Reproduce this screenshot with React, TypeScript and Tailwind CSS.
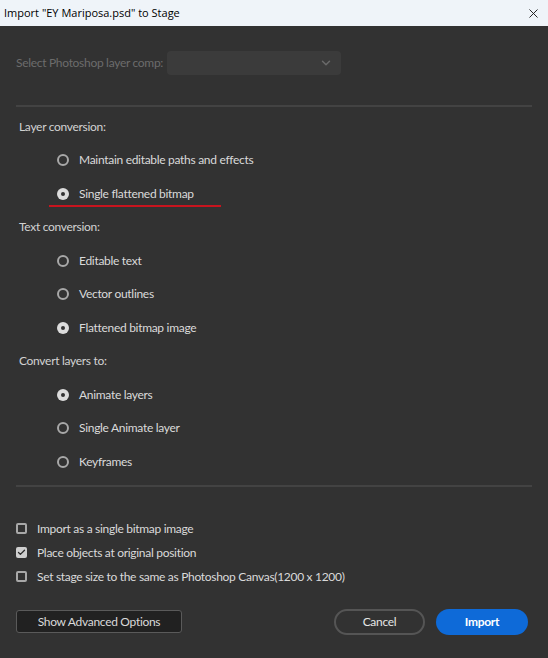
import { X, ChevronDown, Check } from "lucide-react"

const Radio = ({ label, checked, underline }: { label: string; checked?: boolean; underline?: boolean }) => (
  <div className="relative flex h-[33.5px] items-center pl-[57px]">
    {checked ? (
      <span className="flex h-[12px] w-[12px] items-center justify-center rounded-full bg-[#dcdcdc]">
        <span className="h-[4px] w-[4px] rounded-full bg-[#323232]" />
      </span>
    ) : (
      <span className="h-[12px] w-[12px] rounded-full border-2 border-[#a8a8a8]" />
    )}
    <span className="ml-[10px] text-[#dadada]">{label}</span>
    {underline && <span className="absolute bottom-[4px] left-[49px] h-[2px] w-[172px] bg-[#c8141e]" />}
  </div>
)

const Heading = ({ children }: { children: string }) => (
  <div className="flex h-[33.5px] items-center pl-[19px] text-[#d2d2d2]">{children}</div>
)

const CheckRow = ({ label, checked }: { label: string; checked?: boolean }) => (
  <div className="flex h-[24px] items-center pl-[16px]">
    {checked ? (
      <span className="flex h-[11px] w-[11px] items-center justify-center rounded-[2px] bg-[#cfcfcf]">
        <Check className="h-[9px] w-[9px] text-[#2a2a2a]" strokeWidth={3.5} />
      </span>
    ) : (
      <span className="h-[11px] w-[11px] rounded-[2px] border-2 border-[#a8a8a8]" />
    )}
    <span className="ml-[10px] text-[#dadada]">{label}</span>
  </div>
)

export default function App() {
  return (
    <div className="flex h-[658px] w-[548px] flex-col overflow-hidden" style={{ fontFamily: "Lato, 'Open Sans', sans-serif" }}>
      <div className="flex h-[26px] shrink-0 items-center justify-between bg-[#eff4f9] pl-[4px] pr-[7px] text-[11px] text-black" style={{ fontFamily: "'Open Sans', 'Noto Sans', sans-serif" }}>
        <span>Import "EY Mariposa.psd" to Stage</span>
        <X className="h-[15px] w-[15px] text-[#1a1a1a]" strokeWidth={1.5} />
      </div>
      <div className="flex flex-1 flex-col bg-[#323232] text-[12px] tracking-[-0.3px]">
        <div className="flex h-[24px] items-center pl-[16px] mt-[25px]">
          <span className="text-[#6c6c6c]">Select Photoshop layer comp:</span>
          <div className="ml-[4px] flex h-[24px] w-[174px] items-center justify-end rounded-[4px] bg-[#3b3b3b] pr-[8px]">
            <ChevronDown className="h-[14px] w-[14px] text-[#6a6a6a]" strokeWidth={2.5} />
          </div>
        </div>
        <div className="mx-[16px] mt-[30px] h-[2px] bg-[#434343]" />
        <div className="mt-[3px]">
          <Heading>Layer conversion:</Heading>
          <Radio label="Maintain editable paths and effects" />
          <Radio label="Single flattened bitmap" checked underline />
          <Heading>Text conversion:</Heading>
          <Radio label="Editable text" />
          <Radio label="Vector outlines" />
          <Radio label="Flattened bitmap image" checked />
          <Heading>Convert layers to:</Heading>
          <Radio label="Animate layers" checked />
          <Radio label="Single Animate layer" />
          <Radio label="Keyframes" />
        </div>
        <div className="mx-[16px] mt-[6px] h-[2px] bg-[#434343]" />
        <div className="mt-[30px]">
          <CheckRow label="Import as a single bitmap image" />
          <CheckRow label="Place objects at original position" checked />
          <CheckRow label="Set stage size to the same as Photoshop Canvas(1200 x 1200)" />
        </div>
        <div className="mt-[20px] flex h-[26px] items-center px-[16px]">
          <button className="h-[23px] w-[166px] rounded-[3px] border border-[#5a5a5a] bg-[#212121] text-[#dadada]">
            Show Advanced Options
          </button>
          <div className="ml-auto flex gap-[11px] pr-[4px]">
            <button className="h-[26px] w-[91px] rounded-full border-2 border-[#555555] text-[#e6e6e6]">Cancel</button>
            <button className="h-[26px] w-[92px] rounded-full bg-[#0e6ad8] font-bold text-white">Import</button>
          </div>
        </div>
      </div>
    </div>
  )
}
